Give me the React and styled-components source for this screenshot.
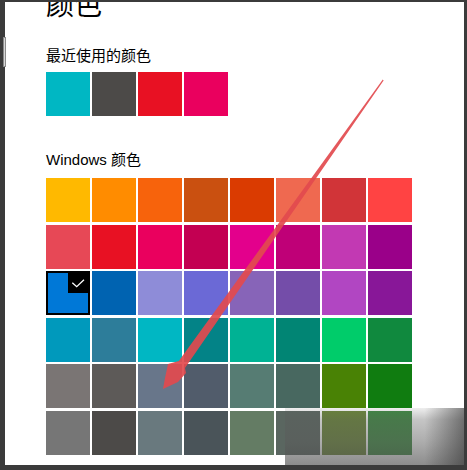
import React from "react";
import styled, { createGlobalStyle } from "styled-components";

const Global = createGlobalStyle`
  html, body { margin: 0; padding: 0; background: #3b3b3b; }
  * { box-sizing: border-box; }
`;

const Frame = styled.div`
  position: relative;
  width: 467px;
  height: 470px;
  background: #3b3b3b;
  padding: 2px 3px 5px 5px;
  overflow: hidden;
  font-family: "Liberation Sans", "Noto Sans CJK SC", sans-serif;
  color: #000;
`;

const Panel = styled.div`
  height: 100%;
  background: #fff;
  padding-left: 41px;
  overflow: hidden;
`;

const Title = styled.h1`
  margin: -13px 0 0 0;
  font-size: 28px;
  line-height: 28px;
  font-weight: 400;
  font-family: "Noto Sans CJK SC", sans-serif;
`;

const SectionLabel = styled.div`
  margin-top: ${(p) => p.$top}px;
  font-size: 15px;
  line-height: 20px;
`;

const SwatchRow = styled.div`
  display: flex;
  gap: 2px;
  margin-top: 6px;
`;

const Grid = styled.div`
  display: grid;
  grid-template-columns: repeat(8, 44px);
  grid-auto-rows: 44px;
  column-gap: 2px;
  row-gap: 2.6px;
  margin-top: 8px;
`;

const Swatch = styled.div`
  position: relative;
  width: 44px;
  height: 44px;
  background: ${(p) => p.$color};
  box-shadow: ${(p) => (p.$selected ? "inset 0 0 0 2px #000" : "none")};
`;

const CheckBadge = styled.div`
  position: absolute;
  top: 0;
  right: 0;
  width: 22px;
  height: 22px;
  background: #000;
  display: flex;
`;

const ScrollThumb = styled.div`
  position: absolute;
  left: 3px;
  top: 37px;
  width: 3px;
  height: 30px;
  border: 1px solid #8a8a8a;
  background: #d8d8d8;
`;

const Watermark = styled.div`
  position: absolute;
  left: 285px;
  top: 408px;
  width: 179px;
  height: 57px;
  background-image:
    linear-gradient(90deg, rgba(40, 40, 40, 0) 0%, rgba(40, 40, 40, 0) 78%, rgba(40, 40, 40, 0.55) 100%),
    linear-gradient(180deg, rgba(90, 90, 90, 0.1) 0%, rgba(90, 90, 90, 0.35) 20%, rgba(90, 90, 90, 0.5) 60%, rgba(80, 80, 80, 0.65) 100%);
`;

const Annotation = styled.svg`
  position: absolute;
  left: 0;
  top: 0;
  width: 467px;
  height: 470px;
  pointer-events: none;
`;

const recent = ["#00b7c3", "#4c4a48", "#e81123", "#ea005e"];

const palette = [
  "#FFB900", "#FF8C00", "#F7630C", "#CA5010", "#DA3B01", "#EF6950", "#D13438", "#FF4343",
  "#E74856", "#E81123", "#EA005E", "#C30052", "#E3008C", "#BF0077", "#C239B3", "#9A0089",
  "#0078D7", "#0063B1", "#8E8CD8", "#6B69D6", "#8764B8", "#744DA9", "#B146C2", "#881798",
  "#0099BC", "#2D7D9A", "#00B7C3", "#038387", "#00B294", "#018574", "#00CC6A", "#10893E",
  "#7A7574", "#5D5A58", "#68768A", "#515C6B", "#567C73", "#486860", "#498205", "#107C10",
  "#767676", "#4C4A48", "#69797E", "#4A5459", "#647C64", "#5A6660", "#6A8638", "#3E8A42",
];

export default function App() {
  return (
    <Frame>
      <Global />
      <Panel>
        <Title>颜色</Title>
        <SectionLabel $top={29}>最近使用的颜色</SectionLabel>
        <SwatchRow>
          {recent.map((c) => (
            <Swatch key={c} $color={c} />
          ))}
        </SwatchRow>
        <SectionLabel $top={34}>Windows 颜色</SectionLabel>
        <Grid>
          {palette.map((c, i) => (
            <Swatch key={i} $color={c} $selected={i === 16}>
              {i === 16 && (
                <CheckBadge>
                  <svg width="22" height="22" viewBox="0 0 22 22">
                    <path d="M4.3 11.7 L8.7 15.7 L16 8.8" fill="none" stroke="#fff" strokeWidth="1.3" />
                  </svg>
                </CheckBadge>
              )}
            </Swatch>
          ))}
        </Grid>
      </Panel>
      <ScrollThumb />
      <Watermark />
      <Annotation viewBox="0 0 467 470">
        <polygon
          points="383.6,80.6 185,368 186,373 178,382 163,389 165,378 168,364 178.8,361 382.8,79.6"
          fill="#e24a4e"
          opacity="0.92"
        />
      </Annotation>
    </Frame>
  );
}
